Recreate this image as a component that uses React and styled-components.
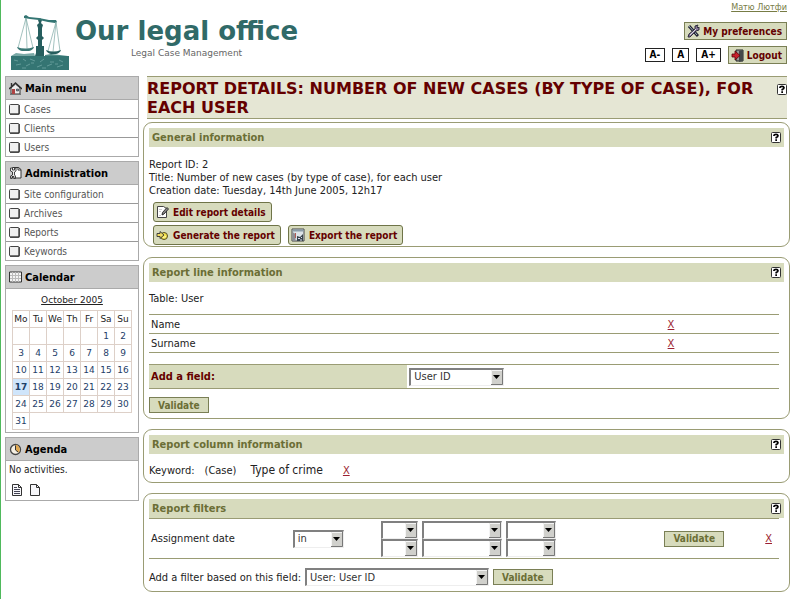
import React from "react";
import styled, { createGlobalStyle } from "styled-components";

const olive = "#9a9c74";
const bar = "#d7dbbd";
const maroon = "#640000";
const wideFont = `"DejaVu Sans", Verdana, sans-serif`;

const GlobalStyle = createGlobalStyle`
  * { box-sizing: border-box; }
  body {
    margin: 0;
    background: #fff;
    color: #222;
    font: 11px/13px "DejaVu Sans Condensed", "DejaVu Sans", Verdana, sans-serif;
  }
  button, select { font-family: inherit; }
`;

const Page = styled.div`
  border-left: 1px solid #4fb95c;
  padding: 0 3px 0 4px;
  min-height: 100vh;
`;

const Header = styled.header`
  display: flex;
  justify-content: space-between;
  height: 76px;
  padding: 0 3px 0 5px;
`;

const Brand = styled.div`
  display: flex;
  gap: 5px;
  padding-top: 15px;
`;

const BrandText = styled.div`
  font-family: ${wideFont};
  text-align: center;
`;

const SiteName = styled.h1`
  margin: 0;
  font-size: 26px;
  line-height: 32px;
  color: #306a68;
`;

const Tagline = styled.p`
  margin: 0;
  font-size: 9px;
  line-height: 12px;
  color: #666;
`;

const UserTools = styled.div`
  display: flex;
  flex-direction: column;
  align-items: flex-end;
`;

const UserLink = styled.a`
  font-size: 9px;
  line-height: 14px;
  color: #777c45;
  margin-bottom: 8px;
`;

const ToolRow = styled.div`
  display: flex;
  align-items: center;
  gap: 7px;
  margin-top: 6px;
`;

const ToolButton = styled.a`
  display: flex;
  align-items: center;
  gap: 3px;
  height: 18px;
  padding: 0 4px 0 2px;
  border: 1px solid #7a7f55;
  background: ${bar};
  color: ${maroon};
  font-size: 10px;
  font-weight: bold;
  text-decoration: none;
`;

const SizeButton = styled.button`
  height: 14px;
  padding: 0 4px;
  border: 1px solid #222;
  background: #fff;
  color: #000;
  font-size: 10px;
  line-height: 12px;
  font-weight: bold;
`;

const Columns = styled.div`
  display: flex;
  gap: 4px;
  align-items: flex-start;
`;

const Sidebar = styled.aside`
  flex: 0 0 134px;
  display: flex;
  flex-direction: column;
  gap: 4px;
`;

const SideBox = styled.section`
  border: 1px solid #aaa;
`;

const SideTitle = styled.h2`
  display: flex;
  align-items: center;
  gap: 3px;
  height: 23px;
  margin: 0;
  padding-left: 3px;
  border-bottom: 1px solid #aaa;
  background: #ccc;
  color: #000;
  font-size: 11px;
`;

const MenuList = styled.ul`
  list-style: none;
  margin: 0;
  padding: 0;
`;

const MenuItem = styled.li`
  border-bottom: 1px solid #999;
  &:last-child { border-bottom: 0; }
`;

const MenuLink = styled.a`
  display: flex;
  align-items: center;
  gap: 4px;
  height: 18px;
  padding-left: 3px;
  color: #555;
  font-size: 10px;
  text-decoration: none;
`;

const CalendarBody = styled.div`
  padding: 5px 6px 2px;
  font-family: ${wideFont};
  font-size: 9px;
`;

const Month = styled.a`
  display: block;
  margin-bottom: 3px;
  text-align: center;
  color: #222;
  text-decoration: underline;
`;

const DayTable = styled.table`
  width: 100%;
  table-layout: fixed;
  border-collapse: collapse;
  text-align: center;
`;

const DayName = styled.th`
  height: 17px;
  padding: 0;
  border: 1px solid #ddd0c8;
  font-weight: normal;
`;

const Day = styled.td`
  height: 17px;
  padding: 0;
  border: ${(p) => (p.$outside ? "0" : "1px solid #ddd0c8")};
  background: ${(p) => (p.$today ? "#cfe5fb" : "transparent")};
`;

const DayLink = styled.a`
  color: #1d4068;
  font-weight: ${(p) => (p.$today ? "bold" : "normal")};
  text-decoration: none;
`;

const AgendaBody = styled.div`
  padding: 2px 3px 3px;
  font-size: 10px;
`;

const AgendaIcons = styled.div`
  display: flex;
  gap: 4px;
  padding: 7px 1px 0;
`;

const IconLink = styled.a`
  display: flex;
`;

const Main = styled.main`
  flex: 1;
  min-width: 0;
  display: flex;
  flex-direction: column;
`;

const TitleBar = styled.div`
  display: flex;
  justify-content: space-between;
  align-items: flex-start;
  margin: 0 3px 3px 4px;
  padding: 2px 0 1px;
  border: solid ${olive};
  border-width: 1px 0;
  background: #e5e6d4;
`;

const PageTitle = styled.h2`
  margin: 0;
  font-family: ${wideFont};
  font-size: 16px;
  line-height: 19px;
  color: ${maroon};
  text-transform: uppercase;
`;

const TitleHelp = styled.div`
  padding-top: 5px;
`;

const HelpButton = styled.button`
  display: flex;
  padding: 0;
  border: 0;
  background: none;
`;

const Panel = styled.section`
  margin-bottom: 10px;
  padding: 5px;
  border: 1px solid ${olive};
  border-radius: 9px;
  &:last-child { margin-bottom: 0; }
`;

const PanelHead = styled.div`
  display: flex;
  justify-content: space-between;
  align-items: center;
  height: 19px;
  padding: 0 3px;
  background: ${bar};
`;

const PanelTitle = styled.h3`
  margin: 0;
  font-size: 11px;
  color: #6b6e35;
`;

const Facts = styled.div`
  margin: 11px 0 5px;
`;

const Fact = styled.p`
  margin: 0;
`;

const Actions = styled.div`
  display: flex;
  gap: 7px;
  margin: 0 4px 3px;
  &:last-child { margin-bottom: -4px; }
`;

const ActionLink = styled.a`
  display: flex;
  align-items: center;
  gap: 4px;
  height: 20px;
  padding: 0 5px 0 2px;
  border: 1px solid #6f7448;
  border-radius: 3px;
  background: ${bar};
  color: ${maroon};
  font-size: 10px;
  font-weight: bold;
  text-decoration: none;
`;

const Intro = styled.p`
  margin: 10px 0 9px;
`;

const LineTable = styled.table`
  width: calc(100% - 5px);
  table-layout: fixed;
  border-collapse: collapse;
`;

const LineCell = styled.td`
  width: ${(p) => p.$width || "auto"};
  height: ${(p) => p.$height || 19}px;
  padding: 0 2px;
  border: solid ${olive};
  border-width: 1px 0;
  text-align: left;
`;

const LabelCell = styled(LineCell)`
  background: ${bar};
  color: ${maroon};
  font-weight: bold;
`;

const AddField = styled.div`
  margin: 11px 0 8px;
`;

const RemoveLink = styled.a`
  color: #9c1f30;
`;

const Validate = styled.button`
  height: 16px;
  padding: 0 8px;
  border: 1px solid #7a7f55;
  background: ${bar};
  color: #6b6e35;
  font-size: 10px;
  line-height: 13px;
  font-weight: bold;
`;

const ColumnInfo = styled.div`
  display: flex;
  align-items: center;
  padding: 10px 0 0;
`;

const KeywordText = styled.span`
  margin-right: ${(p) => p.$gap}px;
`;

const KeywordName = styled.span`
  margin-right: 20px;
  font-size: 12px;
`;

const DateGrid = styled.div`
  display: grid;
  grid-template-columns: 37px 80px 50px;
  gap: 0 4px;
`;

const AddFilter = styled.div`
  display: flex;
  align-items: center;
  gap: 4px;
  margin-top: 9px;
`;

const SelectFrame = styled.span`
  position: relative;
  display: inline-block;
  vertical-align: middle;
  width: ${(p) => p.$width}px;
  height: 18px;
`;

const Picker = styled.select`
  appearance: none;
  display: block;
  width: 100%;
  height: 100%;
  padding: 0 16px 0 3px;
  border: solid;
  border-width: 2px 1px 1px 2px;
  border-color: #808080 #eee #eee #808080;
  border-radius: 0;
  background: #fff;
  color: #333;
  font-size: 11px;
  line-height: 14px;
`;

const PickerArrow = styled.svg`
  position: absolute;
  top: 2px;
  right: 1px;
  pointer-events: none;
`;

function Select({ label, id, width, value }) {
  return (
    <SelectFrame $width={width}>
      <Picker id={id} aria-label={label} defaultValue={value}>
        <option>{value}</option>
      </Picker>
      <PickerArrow width="12" height="15" viewBox="0 0 12 15">
        <path d="M0 0h12v15H0z" fill="#d0d0cc" />
        <path d="M.5 14V.5H11" fill="none" stroke="#f4f4f4" />
        <path d="M11.5 0v14.5H0" fill="none" stroke="#777" />
        <path d="M2 5h7L5.500 9z" fill="#000" />
      </PickerArrow>
    </SelectFrame>
  );
}

function Help() {
  return (
    <HelpButton aria-label="Help">
      <svg width="10" height="11" viewBox="0 0 10 11">
        <rect x=".5" y=".5" width="9" height="10" rx="1" fill="#fff" stroke="#333" />
        <path d="M3 4V3.2Q3.200 2.300 5 2.300T7 3.700Q7 4.700 5.200 5.600V6.500" fill="none" stroke="#000" strokeWidth="1.700" />
        <path d="M4.300 7.300H6V9H4.300z" />
      </svg>
    </HelpButton>
  );
}

function ScalesLogo() {
  return (
    <svg width="60" height="56" viewBox="0 0 60 56" aria-hidden="true">
      <path d="M1 41H59V55H1z" fill="#347573" />
      <path d="M1 41l5-3 8 1 10-1 1 3z" fill="#79a9a6" />
      <path d="M35 40l6-1 17 2H35z" fill="#4f8a87" />
      <path d="M26 31h8v10h-9l1-3z" fill="#265e5e" />
      <path d="M28 5l2-2 2 2-1 3 2 2-1 3v8l2 2-2 2v6h-4v-6l-2-2 2-2v-8l-1-3 2-2z" fill="#265e5e" />
      <path d="M14 1l2-1 3 2 10 1 10 2 7 0 1 2-2 1-7-1-9-2-9-1-6-1z" fill="#347573" />
      <g fill="none" stroke="#7ba7a4" strokeWidth=".7">
        <path d="M16 3L8 33M16 3l7 30M16 3l1 30M46 7l-8 29M46 7l4 29M46 7l-3 30" />
      </g>
      <path d="M7 32q8 3 17 0-1 3-5 4h-7q-4-1-5-4z" fill="#3b7875" />
      <path d="M36 35q7 3 15 0-1 3-5 4h-5q-4-1-5-4z" fill="#265e5e" />
      <path d="M4 45l4 1m5-2l3 2m4-2l5 2m5 1l4-3m6 3l4 0m5-2l4 2M6 50l5-1m5 2l4-2m7 3l5-2m5 1l5-2m5 3l6-2M12 53h4m16 0h4m-15-5h3m21 1h3" stroke="#6fa5a2" fill="none" strokeWidth=".8" />
    </svg>
  );
}

function ToolsIcon() {
  return (
    <svg width="13" height="14" viewBox="0 0 13 14">
      <path d="M2 2l8 9 1 1" fill="none" stroke="#223" strokeWidth="3" />
      <path d="M2 2l8 9" fill="none" stroke="#9bb0b8" strokeWidth="1" />
      <path d="M1 13l1-3 6-5V2l3-1-1 2 1 1 1-1v3L9 7l-6 6z" fill="#879" stroke="#223" strokeWidth=".9" />
      <path d="M3 11l6-6" stroke="#d8dde0" />
    </svg>
  );
}

function DoorIcon() {
  return (
    <svg width="13" height="13" viewBox="0 0 13 13">
      <path d="M5 1h7v11H5z" fill="#999" stroke="#222" />
      <path d="M8 2l4-1v11l-4 1z" fill="#44484a" />
      <path d="M1 5h3V2l5 4.500L4 11V8H1z" fill="#c8202c" stroke="#580008" strokeWidth=".8" />
    </svg>
  );
}

function HouseIcon() {
  return (
    <svg width="13" height="13" viewBox="0 0 13 13">
      <path d="M2 6l4.500-4L11 6v6H2z" fill="#eee" stroke="#333" />
      <path d="M0 7l6.500-6L13 7M2.500 1v3" fill="none" stroke="#333" strokeWidth="1.400" />
      <path d="M3 7h3v5H3z" fill="#b04444" />
      <path d="M7.500 7h2v2h-2z" fill="#7890a8" stroke="#333" strokeWidth=".6" />
      <path d="M1 12.500h11" stroke="#777" />
    </svg>
  );
}

function AdminIcon() {
  return (
    <svg width="13" height="14" viewBox="0 0 13 14">
      <path d="M3.500 1.500h6l2.500 2v8.500H3.500z" fill="#fff" stroke="#333" />
      <path d="M9 1v3h3" fill="none" stroke="#333" />
      <path d="M1.500 2v3l2 1v3l-2 1v2.500h1.500v-2h2v2h1.500V10L5.500 9V6l1.500-1V2H5.500v2h-2V2z" fill="#eee" stroke="#333" strokeWidth=".9" />
    </svg>
  );
}

function GridIcon() {
  return (
    <svg width="13" height="12" viewBox="0 0 13 12">
      <path d="M.5 1h12v10H.5z" fill="#f4f4f4" stroke="#333" />
      <path d="M1 4.500h11M1 7.500h11M3.500 1v10M6.500 1v10M9.500 1v10" stroke="#bbb" />
    </svg>
  );
}

function ClockIcon() {
  return (
    <svg width="13" height="13" viewBox="0 0 13 13">
      <circle cx="6.500" cy="6.500" r="5" fill="#f5efe2" stroke="#444" strokeWidth="1.300" />
      <path d="M6.500 2v5l3 2.500Q12 7 10 4T6.500 2z" fill="#e0a850" />
      <path d="M6.500 2.500v4.500l2.500 2" fill="none" stroke="#333" />
    </svg>
  );
}

function BoxIcon() {
  return (
    <svg width="11" height="11" viewBox="0 0 11 11">
      <rect x=".5" y=".5" width="9.500" height="9.500" rx="1" fill="#f0f0f0" stroke="#444" />
      <path d="M1 10.200h9.200V1" fill="none" stroke="#222" />
    </svg>
  );
}

function SheetIcon({ lined }) {
  return (
    <svg width="14" height="14" viewBox="0 0 14 14">
      <path d="M2.500 1.500h6l3 3v8h-9z" fill="#f7f7fa" stroke="#333" />
      <path d="M8.500 1.500v3h3" fill="none" stroke="#333" />
      {lined && <path d="M4 4.500h3M4 6.500h6M4 8.500h6M4 10.500h6" stroke="#445" />}
    </svg>
  );
}

function EditIcon() {
  return (
    <svg width="13" height="14" viewBox="0 0 13 14">
      <path d="M1.500 1.500h6l3 2v9h-9z" fill="#fff" stroke="#444" />
      <path d="M3 4.500h3M3 6.500h2M3 10.500h2" stroke="#ccc" />
      <path d="M6 10l.500-2.500 4.500-5 1.500 1.500-4.500 5z" fill="#888" stroke="#222" strokeWidth=".9" />
    </svg>
  );
}

function GenerateIcon() {
  return (
    <svg width="13" height="13" viewBox="0 0 13 13">
      <circle cx="8" cy="7" r="3.500" fill="#f3e24c" stroke="#554d20" />
      <path d="M1 4.500h3V2.500L8 6 4 9.500V7.500H1z" fill="#f1dc60" stroke="#333" strokeWidth=".9" />
      <path d="M7 8.500l3-1" fill="none" stroke="#fff8b0" />
    </svg>
  );
}

function ExportIcon() {
  return (
    <svg width="14" height="14" viewBox="0 0 14 14">
      <path d="M1 1h12v12H1z" fill="#dce3e8" stroke="#444" />
      <path d="M1.500 1.500h11v2h-11z" fill="#8b9ca8" />
      <path d="M1.500 4v9h3V6z" fill="#8d8f95" />
      <path d="M6 13V8l3 1 3-3v7z" fill="#37434c" />
      <path d="M7 10.500h2M10 9.500h1M9 12h2" stroke="#dde" />
      <path d="M4.500 5v5" stroke="#b25b55" />
    </svg>
  );
}

function Menu({ title, icon, items }) {
  return (
    <SideBox>
      <SideTitle>{icon}{title}</SideTitle>
      <MenuList>
        {items.map((item) => (
          <MenuItem key={item}>
            <MenuLink href="#"><BoxIcon />{item}</MenuLink>
          </MenuItem>
        ))}
      </MenuList>
    </SideBox>
  );
}

const dayNames = ["Mo", "Tu", "We", "Th", "Fr", "Sa", "Su"];
const weeks = [0, 1, 2, 3, 4, 5].map((w) => dayNames.map((_, d) => w * 7 + d - 4));

function Calendar() {
  return (
    <SideBox>
      <SideTitle><GridIcon />Calendar</SideTitle>
      <CalendarBody>
        <Month href="#">October 2005</Month>
        <DayTable>
          <thead>
            <tr>{dayNames.map((d) => <DayName key={d}>{d}</DayName>)}</tr>
          </thead>
          <tbody>
            {weeks.map((week) => (
              <tr key={week[0]}>
                {week.map((d) => (
                  <Day key={d} $today={d === 17} $outside={d > 31}>
                    {d > 0 && d <= 31 && <DayLink href="#" $today={d === 17}>{d}</DayLink>}
                  </Day>
                ))}
              </tr>
            ))}
          </tbody>
        </DayTable>
      </CalendarBody>
    </SideBox>
  );
}

function PanelHeader({ children }) {
  return (
    <PanelHead>
      <PanelTitle>{children}</PanelTitle>
      <Help />
    </PanelHead>
  );
}

export default function App() {
  return (
    <Page>
      <GlobalStyle />
      <Header>
        <Brand>
          <ScalesLogo />
          <BrandText>
            <SiteName>Our legal office</SiteName>
            <Tagline>Legal Case Management</Tagline>
          </BrandText>
        </Brand>
        <UserTools>
          <UserLink href="#">Матю Лютфи</UserLink>
          <ToolButton href="#"><ToolsIcon />My preferences</ToolButton>
          <ToolRow>
            <SizeButton>A-</SizeButton>
            <SizeButton>A</SizeButton>
            <SizeButton>A+</SizeButton>
            <ToolButton href="#"><DoorIcon />Logout</ToolButton>
          </ToolRow>
        </UserTools>
      </Header>
      <Columns>
        <Sidebar>
          <Menu title="Main menu" icon={<HouseIcon />} items={["Cases", "Clients", "Users"]} />
          <Menu
            title="Administration"
            icon={<AdminIcon />}
            items={["Site configuration", "Archives", "Reports", "Keywords"]}
          />
          <Calendar />
          <SideBox>
            <SideTitle><ClockIcon />Agenda</SideTitle>
            <AgendaBody>
              No activities.
              <AgendaIcons>
                <IconLink href="#" aria-label="Appointments"><SheetIcon lined /></IconLink>
                <IconLink href="#" aria-label="New appointment"><SheetIcon /></IconLink>
              </AgendaIcons>
            </AgendaBody>
          </SideBox>
        </Sidebar>
        <Main>
          <TitleBar>
            <PageTitle>Report details: Number of new cases (by type of case), for each user</PageTitle>
            <TitleHelp><Help /></TitleHelp>
          </TitleBar>

          <Panel>
            <PanelHeader>General information</PanelHeader>
            <Facts>
              <Fact>Report ID: 2</Fact>
              <Fact>Title: Number of new cases (by type of case), for each user</Fact>
              <Fact>Creation date: Tuesday, 14th June 2005, 12h17</Fact>
            </Facts>
            <Actions>
              <ActionLink href="#"><EditIcon />Edit report details</ActionLink>
            </Actions>
            <Actions>
              <ActionLink href="#"><GenerateIcon />Generate the report</ActionLink>
              <ActionLink href="#"><ExportIcon />Export the report</ActionLink>
            </Actions>
          </Panel>

          <Panel>
            <PanelHeader>Report line information</PanelHeader>
            <Intro>Table: User</Intro>
            <LineTable>
              <tbody>
                {["Name", "Surname"].map((name) => (
                  <tr key={name}>
                    <LineCell $width="82%">{name}</LineCell>
                    <LineCell><RemoveLink href="#">X</RemoveLink></LineCell>
                  </tr>
                ))}
              </tbody>
            </LineTable>
            <AddField>
              <LineTable>
                <tbody>
                  <tr>
                    <LabelCell as="th" $width="41%" $height={24}>
                      <label htmlFor="new-field">Add a field:</label>
                    </LabelCell>
                    <LineCell><Select id="new-field" width={95} value="User ID" /></LineCell>
                  </tr>
                </tbody>
              </LineTable>
            </AddField>
            <Validate>Validate</Validate>
          </Panel>

          <Panel>
            <PanelHeader>Report column information</PanelHeader>
            <ColumnInfo>
              <KeywordText $gap={10}>Keyword:</KeywordText>
              <KeywordText $gap={14}>(Case)</KeywordText>
              <KeywordName>Type of crime</KeywordName>
              <RemoveLink href="#">X</RemoveLink>
            </ColumnInfo>
          </Panel>

          <Panel>
            <PanelHeader>Report filters</PanelHeader>
            <LineTable>
              <tbody>
                <tr>
                  <LineCell $width="22.5%" $height={40}>Assignment date</LineCell>
                  <LineCell $width="14%"><Select label="Condition" width={51} value="in" /></LineCell>
                  <LineCell $width="45%">
                    <DateGrid>
                      <Select label="From day" width={37} value="" />
                      <Select label="From month" width={80} value="" />
                      <Select label="From year" width={50} value="" />
                      <Select label="To day" width={37} value="" />
                      <Select label="To month" width={80} value="" />
                      <Select label="To year" width={50} value="" />
                    </DateGrid>
                  </LineCell>
                  <LineCell $width="16%"><Validate>Validate</Validate></LineCell>
                  <LineCell><RemoveLink href="#">X</RemoveLink></LineCell>
                </tr>
              </tbody>
            </LineTable>
            <AddFilter>
              <label htmlFor="filter-field">Add a filter based on this field:</label>
              <Select id="filter-field" width={184} value="User: User ID" />
              <Validate>Validate</Validate>
            </AddFilter>
          </Panel>
        </Main>
      </Columns>
    </Page>
  );
}
